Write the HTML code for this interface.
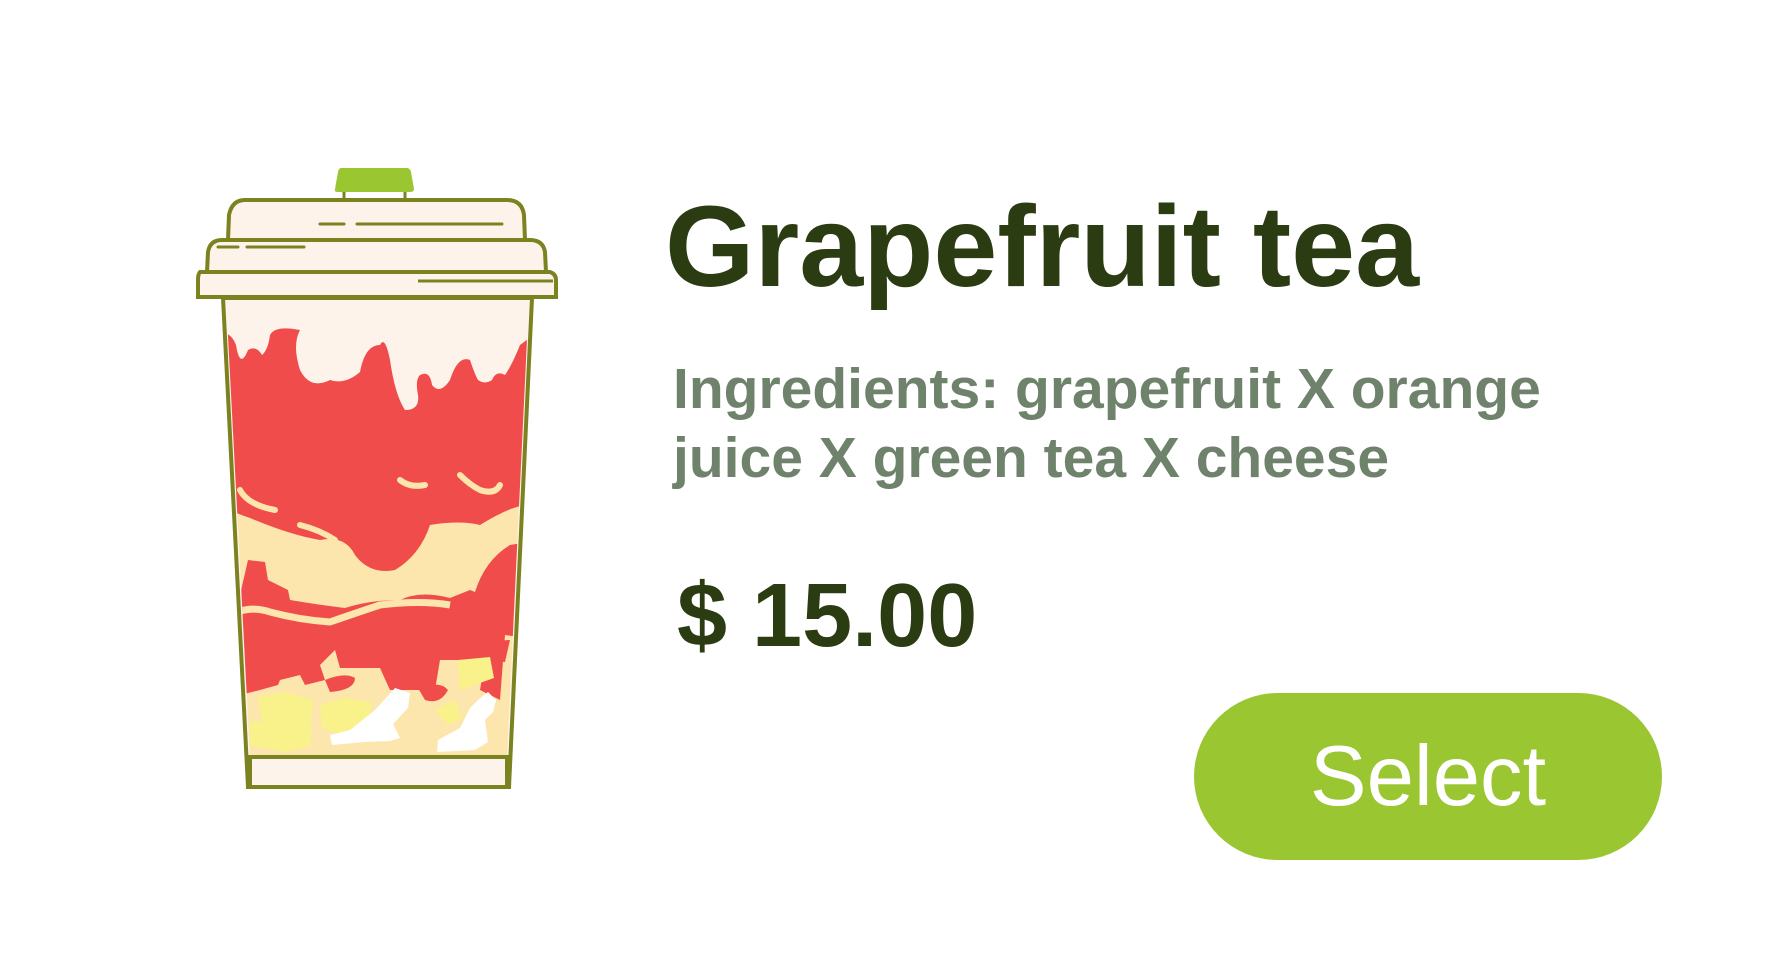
<!DOCTYPE html>
<html><head><meta charset="utf-8"><style>
html,body{margin:0;padding:0;background:#fff;width:1791px;height:955px;overflow:hidden;position:relative;font-family:"Liberation Sans",sans-serif}
.t{position:absolute;white-space:nowrap}
</style></head><body>
<svg width="1791" height="955" style="position:absolute;left:0;top:0">
<defs><clipPath id="c"><polygon points="226,298 529,298 507,757 250,757"/></clipPath></defs>
<polygon points="223,298 532,298 509,787 248,787" fill="#fdf3ea" stroke="#7b8220" stroke-width="4"/>
<g clip-path="url(#c)">
<rect x="220" y="495" width="320" height="265" fill="#fde6ad"/>
<path d="M220,335 Q230,330 236,345 Q240,370 248,350 Q256,345 262,355 Q268,350 270,335 Q275,325 300,330 Q292,345 300,370 Q310,390 330,380 Q345,385 360,372 Q365,345 380,345 Q385,335 390,360 Q395,395 405,410 Q420,410 418,395 Q415,380 420,375 Q430,370 432,385 Q440,395 450,380 Q458,355 470,360 Q475,375 478,380 Q485,385 492,380 Q496,370 505,375 Q512,365 520,345 L540,330 L540,505 Q520,500 480,525 Q460,520 430,525 Q420,555 395,570 Q370,575 355,555 Q345,535 320,540 Q290,535 250,518 Q232,512 220,505 Z" fill="#ef4c4b"/>
<path d="M240,490 Q248,505 275,510 M300,525 Q320,530 335,540 M400,480 Q410,488 425,485 M460,475 Q470,485 480,490 Q495,495 500,485" stroke="#fde6ad" stroke-width="6" fill="none" stroke-linecap="round"/>
<path d="M220,600 L240,595 L248,560 L265,562 L268,580 L288,590 L290,600 Q320,605 345,608 Q370,600 400,600 Q420,590 450,598 L470,590 L475,592 Q485,560 510,545 L540,540 L540,640 L505,635 L500,700 L480,690 L485,660 L440,660 L435,690 L390,690 L380,668 L340,668 L335,650 L320,665 L325,680 L305,685 L300,675 L280,680 L278,685 L260,690 L220,700 Z" fill="#ef4c4b"/>
<path d="M230,615 Q250,605 270,612 Q300,620 330,622 Q350,615 380,605 Q420,600 450,605" stroke="#fde6ad" stroke-width="7" fill="none"/>
<path d="M325,680 Q345,672 355,678 Q355,690 330,692 Z M418,688 Q440,680 448,690 Q440,705 425,700 Z" fill="#ef4c4b"/>
<path d="M477,642 L510,640 L505,662 L480,660 Z" fill="#ef4c4b"/>
<polygon points="258,697 285,692 313,700 310,727 283,730 262,720" fill="#f9f18a"/>
<polygon points="320,705 345,697 372,703 368,725 345,737 322,728" fill="#f9f18a"/>
<polygon points="250,722 278,720 312,725 310,746 285,752 250,745" fill="#f9f18a"/>
<polygon points="458,660 490,657 494,678 460,690" fill="#f9f18a"/>
<polygon points="435,710 455,700 462,718 448,725" fill="#f9f18a"/>
<polygon points="395,688 410,693 408,708 393,724 400,738 390,741 365,742 332,745 330,735 350,730 375,710" fill="#fff"/>
<polygon points="488,692 496,700 493,712 485,720 488,742 475,750 437,752 438,740 460,728 470,708 478,700" fill="#fff"/>
</g>
<rect x="250" y="757" width="257" height="30" fill="#fdf3ea" stroke="#7b8220" stroke-width="4"/>
<path d="M344,191 L344,199 M405,191 L405,199" stroke="#7b8220" stroke-width="3"/>
<path d="M341,168 L407,168 Q410,168 411,172 L414,189 Q414,192 410,192 L338,192 Q334,192 335,189 L338,172 Q339,168 341,168 Z" fill="#9ac731"/>
<path d="M228,240 L229,215 Q232,200 245,200 L507,200 Q522,200 524,215 L525,240 Z" fill="#fdf3ea" stroke="#7b8220" stroke-width="4"/>
<path d="M320,224 L344,224 M357,224 L502,224" stroke="#7b8220" stroke-width="3" stroke-linecap="round"/>
<path d="M207,272 L208,252 Q210,240 222,240 L530,240 Q543,240 545,252 L546,272 Z" fill="#fdf3ea" stroke="#7b8220" stroke-width="4"/>
<path d="M218,247 L238,247 M247,247 L304,247" stroke="#7b8220" stroke-width="3" stroke-linecap="round"/>
<path d="M200,272 L550,272 Q556,274 556,280 L556,297 L198,297 L198,280 Q198,274 200,272 Z" fill="#fdf3ea" stroke="#7b8220" stroke-width="4"/>
<path d="M418,281 L553,281" stroke="#7b8220" stroke-width="3"/>
</svg>
<div class="t" style="left:665px;top:182px;font-size:115px;font-weight:bold;color:#2c3c12;line-height:130px">Grapefruit tea</div>
<div class="t" style="left:673px;top:355px;font-size:57px;font-weight:bold;color:#6f826b;line-height:69px">Ingredients: grapefruit X orange<br>juice X green tea X cheese</div>
<div class="t" style="left:677px;top:566px;font-size:90px;font-weight:bold;color:#2c3c12;line-height:100px">$ 15.00</div>
<div style="position:absolute;left:1194px;top:693px;width:468px;height:167px;border-radius:84px;background:#9ac731;color:#fff;font-size:85px;text-align:center;line-height:167px">Select</div>
</body></html>
